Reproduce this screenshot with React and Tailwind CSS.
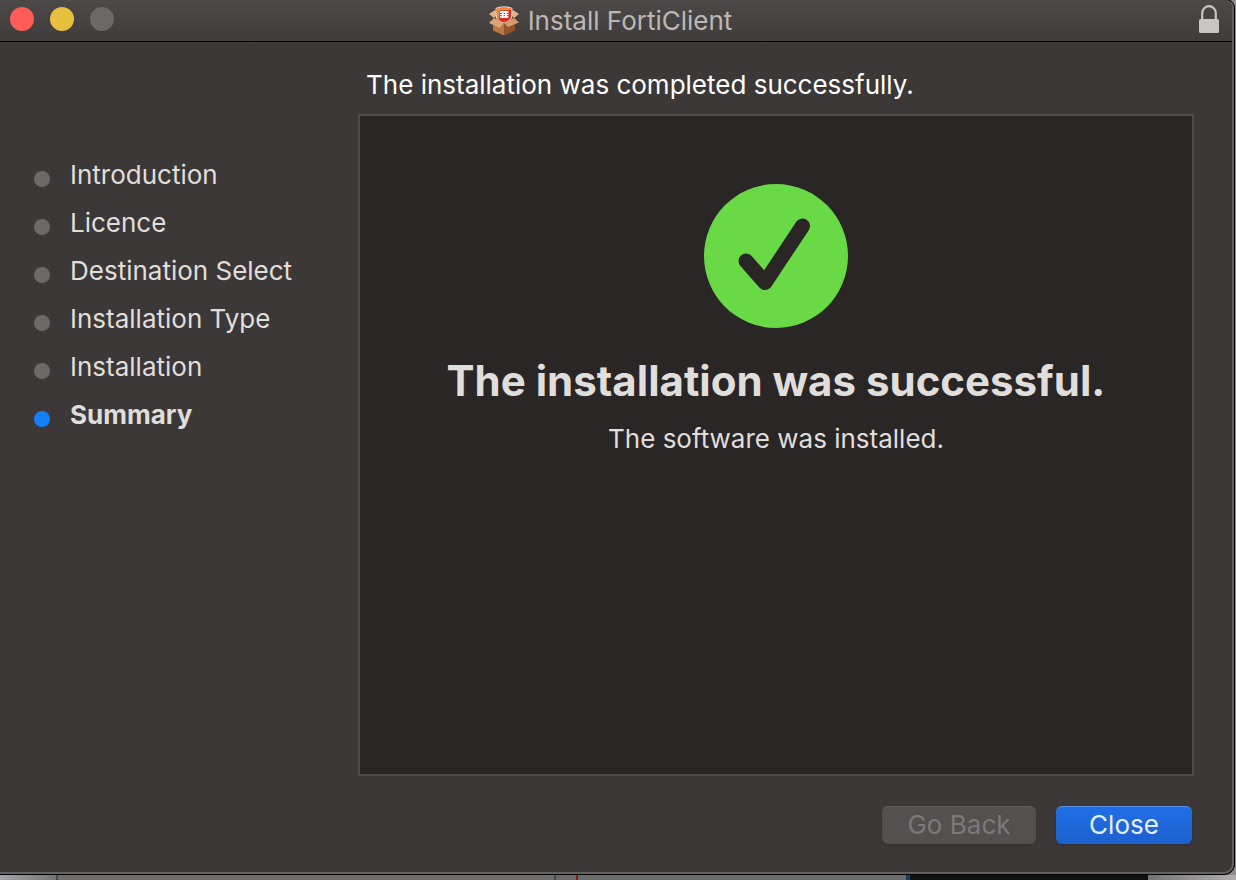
const steps = [
  'Introduction',
  'Licence',
  'Destination Select',
  'Installation Type',
  'Installation',
  'Summary',
];

function PackageIcon() {
  return (
    <svg viewBox="0 0 32 30" className="h-[30px] w-8" aria-hidden="true">
      <path d="M6 9 L16 6 L27 9 L26 15 L16 18 L6 15 Z" fill="#6b3c1c" />
      <path d="M1 8 L7 4 L10 8 L6 12 Z" fill="#e3b48a" />
      <path d="M31 8 L25 4 L22 8 L26 12 Z" fill="#e3b48a" />
      <path d="M7.5 2 Q16 -1.5 24.5 2 L24 12 Q21 16.5 16 17 Q11 16.5 8 12 Z" fill="#e4dedb" />
      <path d="M8.5 2.8 Q16 0 23.5 2.8 L23 11.5 Q20.5 15.8 16 16.3 Q11.5 15.8 9 11.5 Z" fill="#d52d20" />
      <path d="M8.5 2.8 Q16 0 23.5 2.8 L23.4 4 L12 4.5 L11 13.8 L9 11.5 Z" fill="#f08a35" />
      <rect x="12" y="5" width="8.5" height="7" rx="1" fill="#fff" />
      <path d="M12 7.5 H14 M15.5 7.5 H17.2 M18.8 7.5 H20.5 M12 9.7 H14 M15.5 9.7 H17.2 M18.8 9.7 H20.5" stroke="#d52d20" strokeWidth="1" />
      <path d="M5 14 L16 18 V29.5 L5 24.5 Z" fill="#b87745" />
      <path d="M27 14 L16 18 V29.5 L27 24.5 Z" fill="#8f5427" />
      <path d="M6 12 L16 17 L12 22 L1 17 Z" fill="#dca679" />
      <path d="M26 12 L16 17 L20 21 L31 16.5 Z" fill="#d69b6a" />
    </svg>
  );
}

function LockIcon() {
  return (
    <svg viewBox="0 0 20 28" className="w-5 h-7" aria-hidden="true">
      <path d="M3.2 15 V8 a6.8 6.8 0 0 1 13.6 0 V15" fill="none" stroke="#c8c5c4" strokeWidth="2.2" />
      <rect x="0" y="14" width="20" height="14" rx="1.5" fill="#c8c5c4" />
    </svg>
  );
}

function SuccessIcon() {
  return (
    <svg viewBox="0 0 144 144" className="w-36 h-36" aria-hidden="true">
      <circle cx="72" cy="72" r="72" fill="#69da45" />
      <path d="M42 77 L61 98.5 L98.5 42" fill="none" stroke="#2a2625" strokeWidth="15" strokeLinecap="round" strokeLinejoin="round" />
    </svg>
  );
}

function TitleBar() {
  return (
    <header className="relative flex h-[42px] items-center justify-between border-b border-black bg-linear-to-b from-[#4d4948] to-[#403c3b] pb-[3px] pl-2.5 pr-[13px]">
      <div className="flex gap-4">
        <button aria-label="Close window" className="h-6 w-6 rounded-full bg-[#ff5c57]" />
        <button aria-label="Minimise window" className="h-6 w-6 rounded-full bg-[#e6c03c]" />
        <button aria-label="Zoom window" disabled className="h-6 w-6 rounded-full bg-[#6b6867]" />
      </div>
      <div className="absolute inset-x-0 top-0 flex h-[41px] items-center justify-center gap-2 pointer-events-none pr-3">
        <PackageIcon />
        <h1 className="text-[26px] leading-8 text-[#bbb8b6]">Install FortiClient</h1>
      </div>
      <LockIcon />
    </header>
  );
}

function StepList({ current }) {
  return (
    <nav className="w-[358px] shrink-0 pl-[34px] pt-[109px]">
      <ol>
        {steps.map((step) => (
          <li key={step} className="flex h-12 items-center gap-5">
            <span className={`mt-2 h-4 w-4 rounded-full ${step === current ? 'bg-[#147efb]' : 'bg-[#6d6967]'}`} />
            <span className={`text-[26px] leading-8 text-[#e0dedc] ${step === current ? 'font-bold' : ''}`}>{step}</span>
          </li>
        ))}
      </ol>
    </nav>
  );
}

// sliver of the desktop that shows below the window
function Desktop() {
  return (
    <div className="flex h-[5px] shrink-0">
      <div className="w-14 bg-linear-to-r from-[#a5a3a8] to-[#757374]" />
      <div className="w-0.5 bg-[#4a4848]" />
      <div className="flex-1 bg-[#6e6d6c]" />
      <div className="w-0.5 bg-[#4a4848]" />
      <div className="w-5 bg-[#6c6c6c]" />
      <div className="w-0.5 bg-[#8c1a14]" />
      <div className="w-[328px] bg-[#6c6b6d]" />
      <div className="w-1 bg-[#123f63]" />
      <div className="w-[238px] bg-[#131212]" />
      <div className="w-[88px] bg-linear-to-r from-[#757373] to-[#b0aeae]" />
    </div>
  );
}

export default function App() {
  return (
    <div className="flex min-h-screen flex-col bg-[#8e8c8c] font-['Inter','Liberation_Sans',sans-serif]">
      <div className="mr-0.5 mb-px flex flex-1 flex-col overflow-hidden rounded-tr-lg rounded-br-[10px] border-b-2 border-r-2 border-[#656160] bg-[#3c3837] shadow-[0_0_0_1px_#000]">
        <TitleBar />
        <div className="flex flex-1">
          <StepList current="Summary" />
          <main className="flex flex-1 flex-col pb-7 pr-[38px] pt-[27px]">
            <h2 className="pl-2 text-[26px] leading-8 text-white">The installation was completed successfully.</h2>
            <section className="mt-[13px] flex flex-1 flex-col items-center border-2 border-[#4f4b4a] bg-[#2a2625] pt-[68px]">
              <SuccessIcon />
              <p className="mt-7 text-[42px] font-bold leading-[50px] text-[#e0dedd]">The installation was successful.</p>
              <p className="mt-[17px] text-[26px] leading-8 text-[#e0dedd]">The software was installed.</p>
            </section>
            <div className="mt-[30px] flex justify-end gap-5 pr-0.5 text-[26px] leading-8">
              <button disabled className="h-[38px] w-[154px] rounded-md border-t border-[#625e5d] bg-[#54504f] pb-0.5 text-[#7c7978] shadow-sm">Go Back</button>
              <button className="h-[38px] w-[136px] rounded-md border-t border-[#5b95ea] bg-linear-to-b from-[#216fe6] to-[#1c60cc] pb-0.5 text-[#e4edfb] shadow-sm">Close</button>
            </div>
          </main>
        </div>
      </div>
      <Desktop />
    </div>
  );
}
